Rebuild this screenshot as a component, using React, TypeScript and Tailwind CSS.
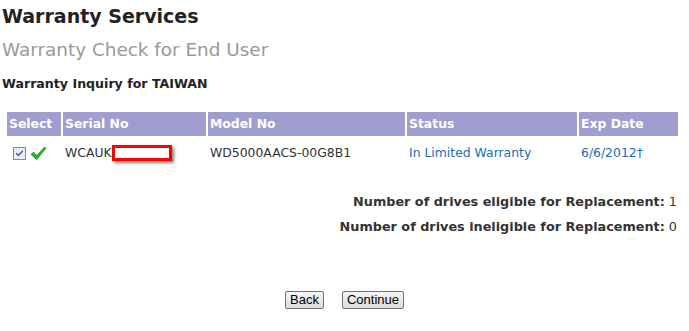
import { Check } from "lucide-react"

const rows = [
  {
    serial: "WCAUK",
    model: "WD5000AACS-00G8B1",
    status: "In Limited Warranty",
    exp: "6/6/2012",
  },
]

export default function App() {
  return (
    <div
      className="w-[689px] h-[331px] bg-white text-[#333] overflow-hidden"
      style={{ fontFamily: '"DejaVu Sans", "Open Sans", sans-serif' }}
    >
      <h1 className="pl-[2px] pt-[1px] text-[19px] leading-[30px] font-bold text-[#222]">Warranty Services</h1>
      <h2 className="pl-[2px] mt-[5px] text-[18.4px] leading-[28px] text-[#999]">Warranty Check for End User</h2>
      <h3 className="pl-[2px] mt-[11px] text-[12.6px] leading-[18px] font-bold text-[#222]">Warranty Inquiry for TAIWAN</h3>

      {/* 保修列表 */}
      <table className="ml-[5px] mt-[17px] w-[675px] border-separate border-spacing-[2px] text-[12.4px]">
        <thead>
          <tr className="bg-[#a09dcf] text-white font-bold text-left">
            <th className="w-[54px] h-[24px] pl-[2px] font-bold">Select</th>
            <th className="w-[143px] pl-[2px] font-bold">Serial No</th>
            <th className="w-[197px] pl-[2px] font-bold">Model No</th>
            <th className="w-[170px] pl-[2px] font-bold">Status</th>
            <th className="pl-[2px] font-bold">Exp Date</th>
          </tr>
        </thead>
        <tbody>
          {rows.map((r) => (
            <tr key={r.model} className="h-[30px]">
              <td className="pl-[6px]">
                <div className="flex items-center gap-[4px]">
                  <span className="w-[13px] h-[13px] border border-[#888] bg-[#e8eef8] flex items-center justify-center">
                    <Check size={9} strokeWidth={3.5} color="#2c4aa0" />
                  </span>
                  <svg width="17" height="17" viewBox="0 0 18 16">
                    <path d="M1 9 L4 6.5 L7 10 L15.5 1 L17 2.5 L7 14.5 Z" fill="#22b822" stroke="#108010" strokeWidth="0.6" />
                  </svg>
                </div>
              </td>
              <td className="pl-[2px]">
                <div className="flex items-center">
                  <span>{r.serial}</span>
                  <span className="w-[60px] h-[16px] border-[3px] border-[#f00] bg-white shadow-[2px_2px_3px_rgba(0,0,0,0.5)]"></span>
                </div>
              </td>
              <td className="pl-[2px]">{r.model}</td>
              <td className="pl-[2px] text-[#1a6db3]">{r.status}</td>
              <td className="pl-[2px] text-[#1a6db3]">{r.exp}†</td>
            </tr>
          ))}
        </tbody>
      </table>

      <div className="mt-[22px] pr-[12px] flex flex-col items-end gap-[6px] text-[12.8px] leading-[19px]">
        <p>
          <span className="font-bold">Number of drives eligible for Replacement:</span> 1
        </p>
        <p>
          <span className="font-bold">Number of drives ineligible for Replacement:</span> 0
        </p>
      </div>

      <div
        className="mt-[55px] flex justify-center gap-[18px] text-[13px] text-black"
        style={{ fontFamily: '"Liberation Sans", Arial, sans-serif' }}
      >
        <button className="h-[18px] px-[4px] leading-[14px] border border-[#707070] rounded-[2px] bg-gradient-to-b from-[#f6f6f6] to-[#dcdcdc]">
          Back
        </button>
        <button className="h-[18px] px-[4px] leading-[14px] border border-[#707070] rounded-[2px] bg-gradient-to-b from-[#f6f6f6] to-[#dcdcdc]">
          Continue
        </button>
      </div>
    </div>
  )
}
